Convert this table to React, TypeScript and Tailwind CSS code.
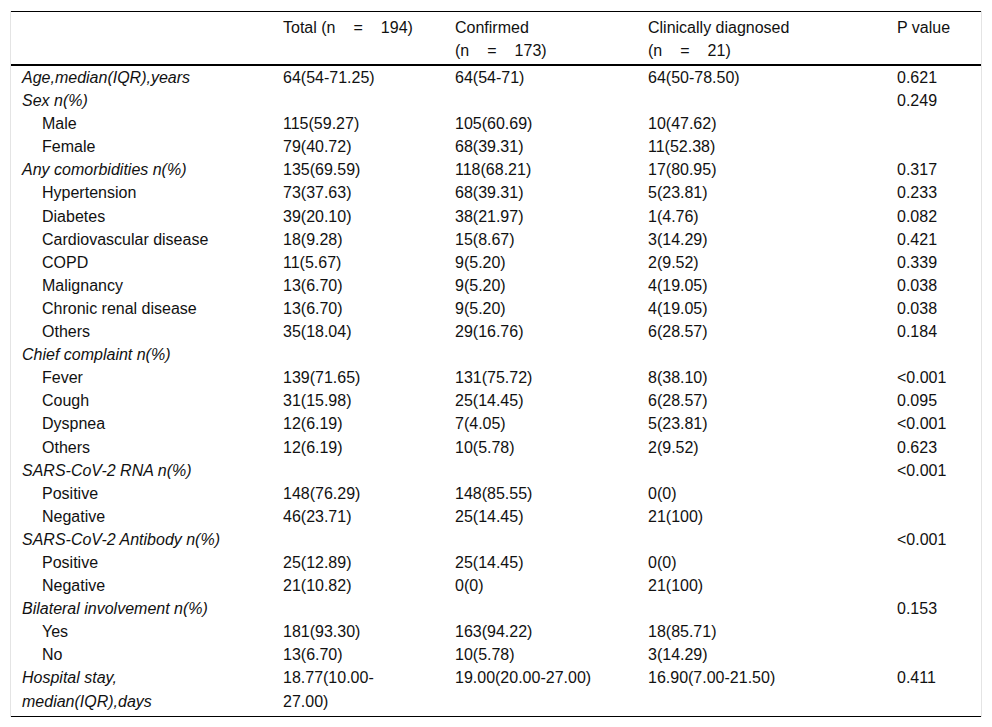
import React from "react";

type Row = {
  label: React.ReactNode;
  head?: boolean;
  total?: React.ReactNode;
  confirmed?: React.ReactNode;
  clinical?: React.ReactNode;
  p?: string;
};

const rows: Row[] = [
  { label: "Age,median(IQR),years", head: true, total: "64(54-71.25)", confirmed: "64(54-71)", clinical: "64(50-78.50)", p: "0.621" },
  { label: "Sex n(%)", head: true, p: "0.249" },
  { label: "Male", total: "115(59.27)", confirmed: "105(60.69)", clinical: "10(47.62)" },
  { label: "Female", total: "79(40.72)", confirmed: "68(39.31)", clinical: "11(52.38)" },
  { label: "Any comorbidities n(%)", head: true, total: "135(69.59)", confirmed: "118(68.21)", clinical: "17(80.95)", p: "0.317" },
  { label: "Hypertension", total: "73(37.63)", confirmed: "68(39.31)", clinical: "5(23.81)", p: "0.233" },
  { label: "Diabetes", total: "39(20.10)", confirmed: "38(21.97)", clinical: "1(4.76)", p: "0.082" },
  { label: "Cardiovascular disease", total: "18(9.28)", confirmed: "15(8.67)", clinical: "3(14.29)", p: "0.421" },
  { label: "COPD", total: "11(5.67)", confirmed: "9(5.20)", clinical: "2(9.52)", p: "0.339" },
  { label: "Malignancy", total: "13(6.70)", confirmed: "9(5.20)", clinical: "4(19.05)", p: "0.038" },
  { label: "Chronic renal disease", total: "13(6.70)", confirmed: "9(5.20)", clinical: "4(19.05)", p: "0.038" },
  { label: "Others", total: "35(18.04)", confirmed: "29(16.76)", clinical: "6(28.57)", p: "0.184" },
  { label: "Chief complaint n(%)", head: true },
  { label: "Fever", total: "139(71.65)", confirmed: "131(75.72)", clinical: "8(38.10)", p: "<0.001" },
  { label: "Cough", total: "31(15.98)", confirmed: "25(14.45)", clinical: "6(28.57)", p: "0.095" },
  { label: "Dyspnea", total: "12(6.19)", confirmed: "7(4.05)", clinical: "5(23.81)", p: "<0.001" },
  { label: "Others", total: "12(6.19)", confirmed: "10(5.78)", clinical: "2(9.52)", p: "0.623" },
  { label: "SARS-CoV-2 RNA n(%)", head: true, p: "<0.001" },
  { label: "Positive", total: "148(76.29)", confirmed: "148(85.55)", clinical: "0(0)" },
  { label: "Negative", total: "46(23.71)", confirmed: "25(14.45)", clinical: "21(100)" },
  { label: "SARS-CoV-2 Antibody n(%)", head: true, p: "<0.001" },
  { label: "Positive", total: "25(12.89)", confirmed: "25(14.45)", clinical: "0(0)" },
  { label: "Negative", total: "21(10.82)", confirmed: "0(0)", clinical: "21(100)" },
  { label: "Bilateral involvement n(%)", head: true, p: "0.153" },
  { label: "Yes", total: "181(93.30)", confirmed: "163(94.22)", clinical: "18(85.71)" },
  { label: "No", total: "13(6.70)", confirmed: "10(5.78)", clinical: "3(14.29)" },
  {
    label: (
      <>
        Hospital stay,
        <br />
        median(IQR),days
      </>
    ),
    head: true,
    total: (
      <>
        18.77(10.00-
        <br />
        27.00)
      </>
    ),
    confirmed: "19.00(20.00-27.00)",
    clinical: "16.90(7.00-21.50)",
    p: "0.411",
  },
];

// header count, e.g. "(n = 194)" with the wide gaps round "="
const N = ({ n }: { n: string }) => (
  <>
    (n<span className="mx-[18px]">=</span>
    {n})
  </>
);

export default function App() {
  const cell = "pl-[11px] pr-[6px] align-top text-left font-normal";
  const th = `${cell} leading-[23px] pt-[4px] pb-[2px]`;
  return (
    <div className="min-h-screen bg-white pt-[11px] text-[16px] text-[#111] font-['Liberation_Sans',Arial,sans-serif]">
      <div className="ml-[10px] w-[972px] border-x border-[#e4e4e4]">
        <table className="w-[970px] table-fixed border-collapse leading-[23.1px]">
          <colgroup>
            <col className="w-[261px]" />
            <col className="w-[172px]" />
            <col className="w-[193px]" />
            <col className="w-[249px]" />
            <col className="w-[95px]" />
          </colgroup>
          <thead>
            <tr className="border-t border-b-2 border-black">
              <th className={th}></th>
              <th className={th}>
                Total <N n="194" />
              </th>
              <th className={th}>
                Confirmed
                <br />
                <N n="173" />
              </th>
              <th className={th}>
                Clinically diagnosed
                <br />
                <N n="21" />
              </th>
              <th className={th}>P value</th>
            </tr>
          </thead>
          <tbody className="border-b border-black">
            {rows.map((r, i) => (
              <tr key={i} className={i === rows.length - 1 ? "[&>td]:pb-[3px]" : ""}>
                <td className={`${cell} ${r.head ? "italic" : "pl-[31px]"}`}>{r.label}</td>
                <td className={cell}>{r.total}</td>
                <td className={cell}>{r.confirmed}</td>
                <td className={cell}>{r.clinical}</td>
                <td className={cell}>{r.p}</td>
              </tr>
            ))}
          </tbody>
        </table>
      </div>
    </div>
  );
}
